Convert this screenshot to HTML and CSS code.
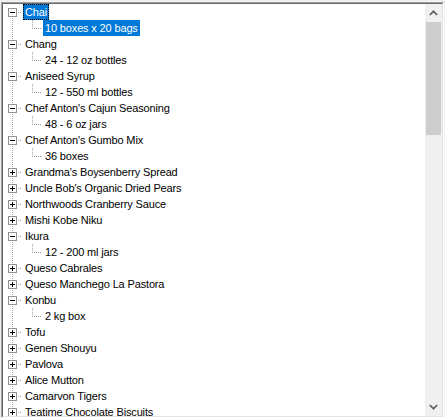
FILE: index.html
```html
<!DOCTYPE html>
<html>
<head>
<meta charset="utf-8">
<link rel="stylesheet" href="styles.css">
</head>
<body>
<div class="frame">
  <div class="well">
    <div class="tree">
      <div class="row"><span class="g first"><span class="box minus"></span></span><span class="label sel focus">Chai</span></div>
      <div class="row"><span class="g pass"></span><span class="g leaf"></span><span class="label sel">10 boxes x 20 bags</span></div>
      <div class="row"><span class="g root"><span class="box minus"></span></span><span class="label">Chang</span></div>
      <div class="row"><span class="g pass"></span><span class="g leaf"></span><span class="label">24 - 12 oz bottles</span></div>
      <div class="row"><span class="g root"><span class="box minus"></span></span><span class="label">Aniseed Syrup</span></div>
      <div class="row"><span class="g pass"></span><span class="g leaf"></span><span class="label">12 - 550 ml bottles</span></div>
      <div class="row"><span class="g root"><span class="box minus"></span></span><span class="label">Chef Anton's Cajun Seasoning</span></div>
      <div class="row"><span class="g pass"></span><span class="g leaf"></span><span class="label">48 - 6 oz jars</span></div>
      <div class="row"><span class="g root"><span class="box minus"></span></span><span class="label">Chef Anton's Gumbo Mix</span></div>
      <div class="row"><span class="g pass"></span><span class="g leaf"></span><span class="label">36 boxes</span></div>
      <div class="row"><span class="g root"><span class="box plus"></span></span><span class="label">Grandma's Boysenberry Spread</span></div>
      <div class="row"><span class="g root"><span class="box plus"></span></span><span class="label">Uncle Bob's Organic Dried Pears</span></div>
      <div class="row"><span class="g root"><span class="box plus"></span></span><span class="label">Northwoods Cranberry Sauce</span></div>
      <div class="row"><span class="g root"><span class="box plus"></span></span><span class="label">Mishi Kobe Niku</span></div>
      <div class="row"><span class="g root"><span class="box minus"></span></span><span class="label">Ikura</span></div>
      <div class="row"><span class="g pass"></span><span class="g leaf"></span><span class="label">12 - 200 ml jars</span></div>
      <div class="row"><span class="g root"><span class="box plus"></span></span><span class="label">Queso Cabrales</span></div>
      <div class="row"><span class="g root"><span class="box plus"></span></span><span class="label">Queso Manchego La Pastora</span></div>
      <div class="row"><span class="g root"><span class="box minus"></span></span><span class="label">Konbu</span></div>
      <div class="row"><span class="g pass"></span><span class="g leaf"></span><span class="label">2 kg box</span></div>
      <div class="row"><span class="g root"><span class="box plus"></span></span><span class="label">Tofu</span></div>
      <div class="row"><span class="g root"><span class="box plus"></span></span><span class="label">Genen Shouyu</span></div>
      <div class="row"><span class="g root"><span class="box plus"></span></span><span class="label">Pavlova</span></div>
      <div class="row"><span class="g root"><span class="box plus"></span></span><span class="label">Alice Mutton</span></div>
      <div class="row"><span class="g root"><span class="box plus"></span></span><span class="label">Camarvon Tigers</span></div>
      <div class="row"><span class="g root"><span class="box plus"></span></span><span class="label">Teatime Chocolate Biscuits</span></div>
    </div>
    <div class="vscroll">
      <div class="sbtn">
        <svg width="17" height="17" viewBox="0 0 17 17"><polyline points="4.8,11 8.5,7.3 12.2,11" fill="none" stroke="#606060" stroke-width="1.7"/></svg>
      </div>
      <div class="track"><div class="thumb"></div></div>
      <div class="sbtn">
        <svg width="17" height="17" viewBox="0 0 17 17"><polyline points="4.8,6 8.5,9.7 12.2,6" fill="none" stroke="#606060" stroke-width="1.7"/></svg>
      </div>
    </div>
  </div>
</div>
</body>
</html>
```

FILE: styles.css
```css
html, body {
  margin: 0;
  padding: 0;
  background: #f0f0f0;
}
body {
  width: 445px;
  height: 418px;
  overflow: hidden;
}
.frame {
  margin: 2px 0 0 1px;
  width: 443px;
  height: 416px;
  box-sizing: border-box;
  border: 1px solid;
  border-color: #a0a0a0 #ffffff #ffffff #a0a0a0;
}
.well {
  height: 100%;
  box-sizing: border-box;
  border: 1px solid;
  border-color: #696969 #e3e3e3 #e3e3e3 #696969;
  display: flex;
}
.tree {
  flex: 1;
  background: #ffffff;
  overflow: hidden;
  font-family: "Liberation Sans", Arial, sans-serif;
  font-size: 11px;
  color: #000;
}
.row {
  display: flex;
  height: 16px;
  white-space: nowrap;
}
.g {
  flex: none;
  width: 20px;
  height: 16px;
  position: relative;
}
.g::before, .g::after {
  content: "";
  position: absolute;
  width: 1px;
  left: 9px;
  background-image: linear-gradient(to bottom, #a0a0a0 50%, transparent 50%);
  background-size: 1px 2px;
}
.g::after {
  height: 1px;
  width: 10px;
  top: 8px;
  background-image: linear-gradient(to right, #a0a0a0 50%, transparent 50%);
  background-size: 2px 1px;
}
.g.first::before { top: 8px; height: 8px; }
.g.root::before { top: 0; height: 16px; }
.g.pass::before { top: 0; height: 16px; }
.g.pass::after { display: none; }
.g.leaf::before { top: 0; height: 9px; }
.g.leaf::after { left: 9px; width: 10px; }
.box {
  position: absolute;
  left: 5px;
  top: 4px;
  width: 9px;
  height: 9px;
  box-sizing: border-box;
  border: 1px solid #919191;
  background: #fff;
  z-index: 1;
}
.box::before {
  content: "";
  position: absolute;
  left: 1px;
  top: 3px;
  width: 5px;
  height: 1px;
  background: #000;
}
.box.plus::after {
  content: "";
  position: absolute;
  left: 3px;
  top: 1px;
  width: 1px;
  height: 5px;
  background: #000;
}
.label {
  display: block;
  height: 16px;
  line-height: 17px;
  padding: 0 2px;
  letter-spacing: -0.15px;
}
.label.sel {
  background: #0078d7;
  color: #fff;
}
.label.focus {
  outline: 1px dotted #000;
  outline-offset: -1px;
}
.vscroll {
  flex: none;
  width: 17px;
  background: #f0f0f0;
  display: flex;
  flex-direction: column;
}
.sbtn {
  flex: none;
  height: 17px;
}
.sbtn svg {
  display: block;
}
.track {
  flex: 1;
  padding: 1px 1px 0;
}
.thumb {
  height: 113px;
  background: #cdcdcd;
}
```
